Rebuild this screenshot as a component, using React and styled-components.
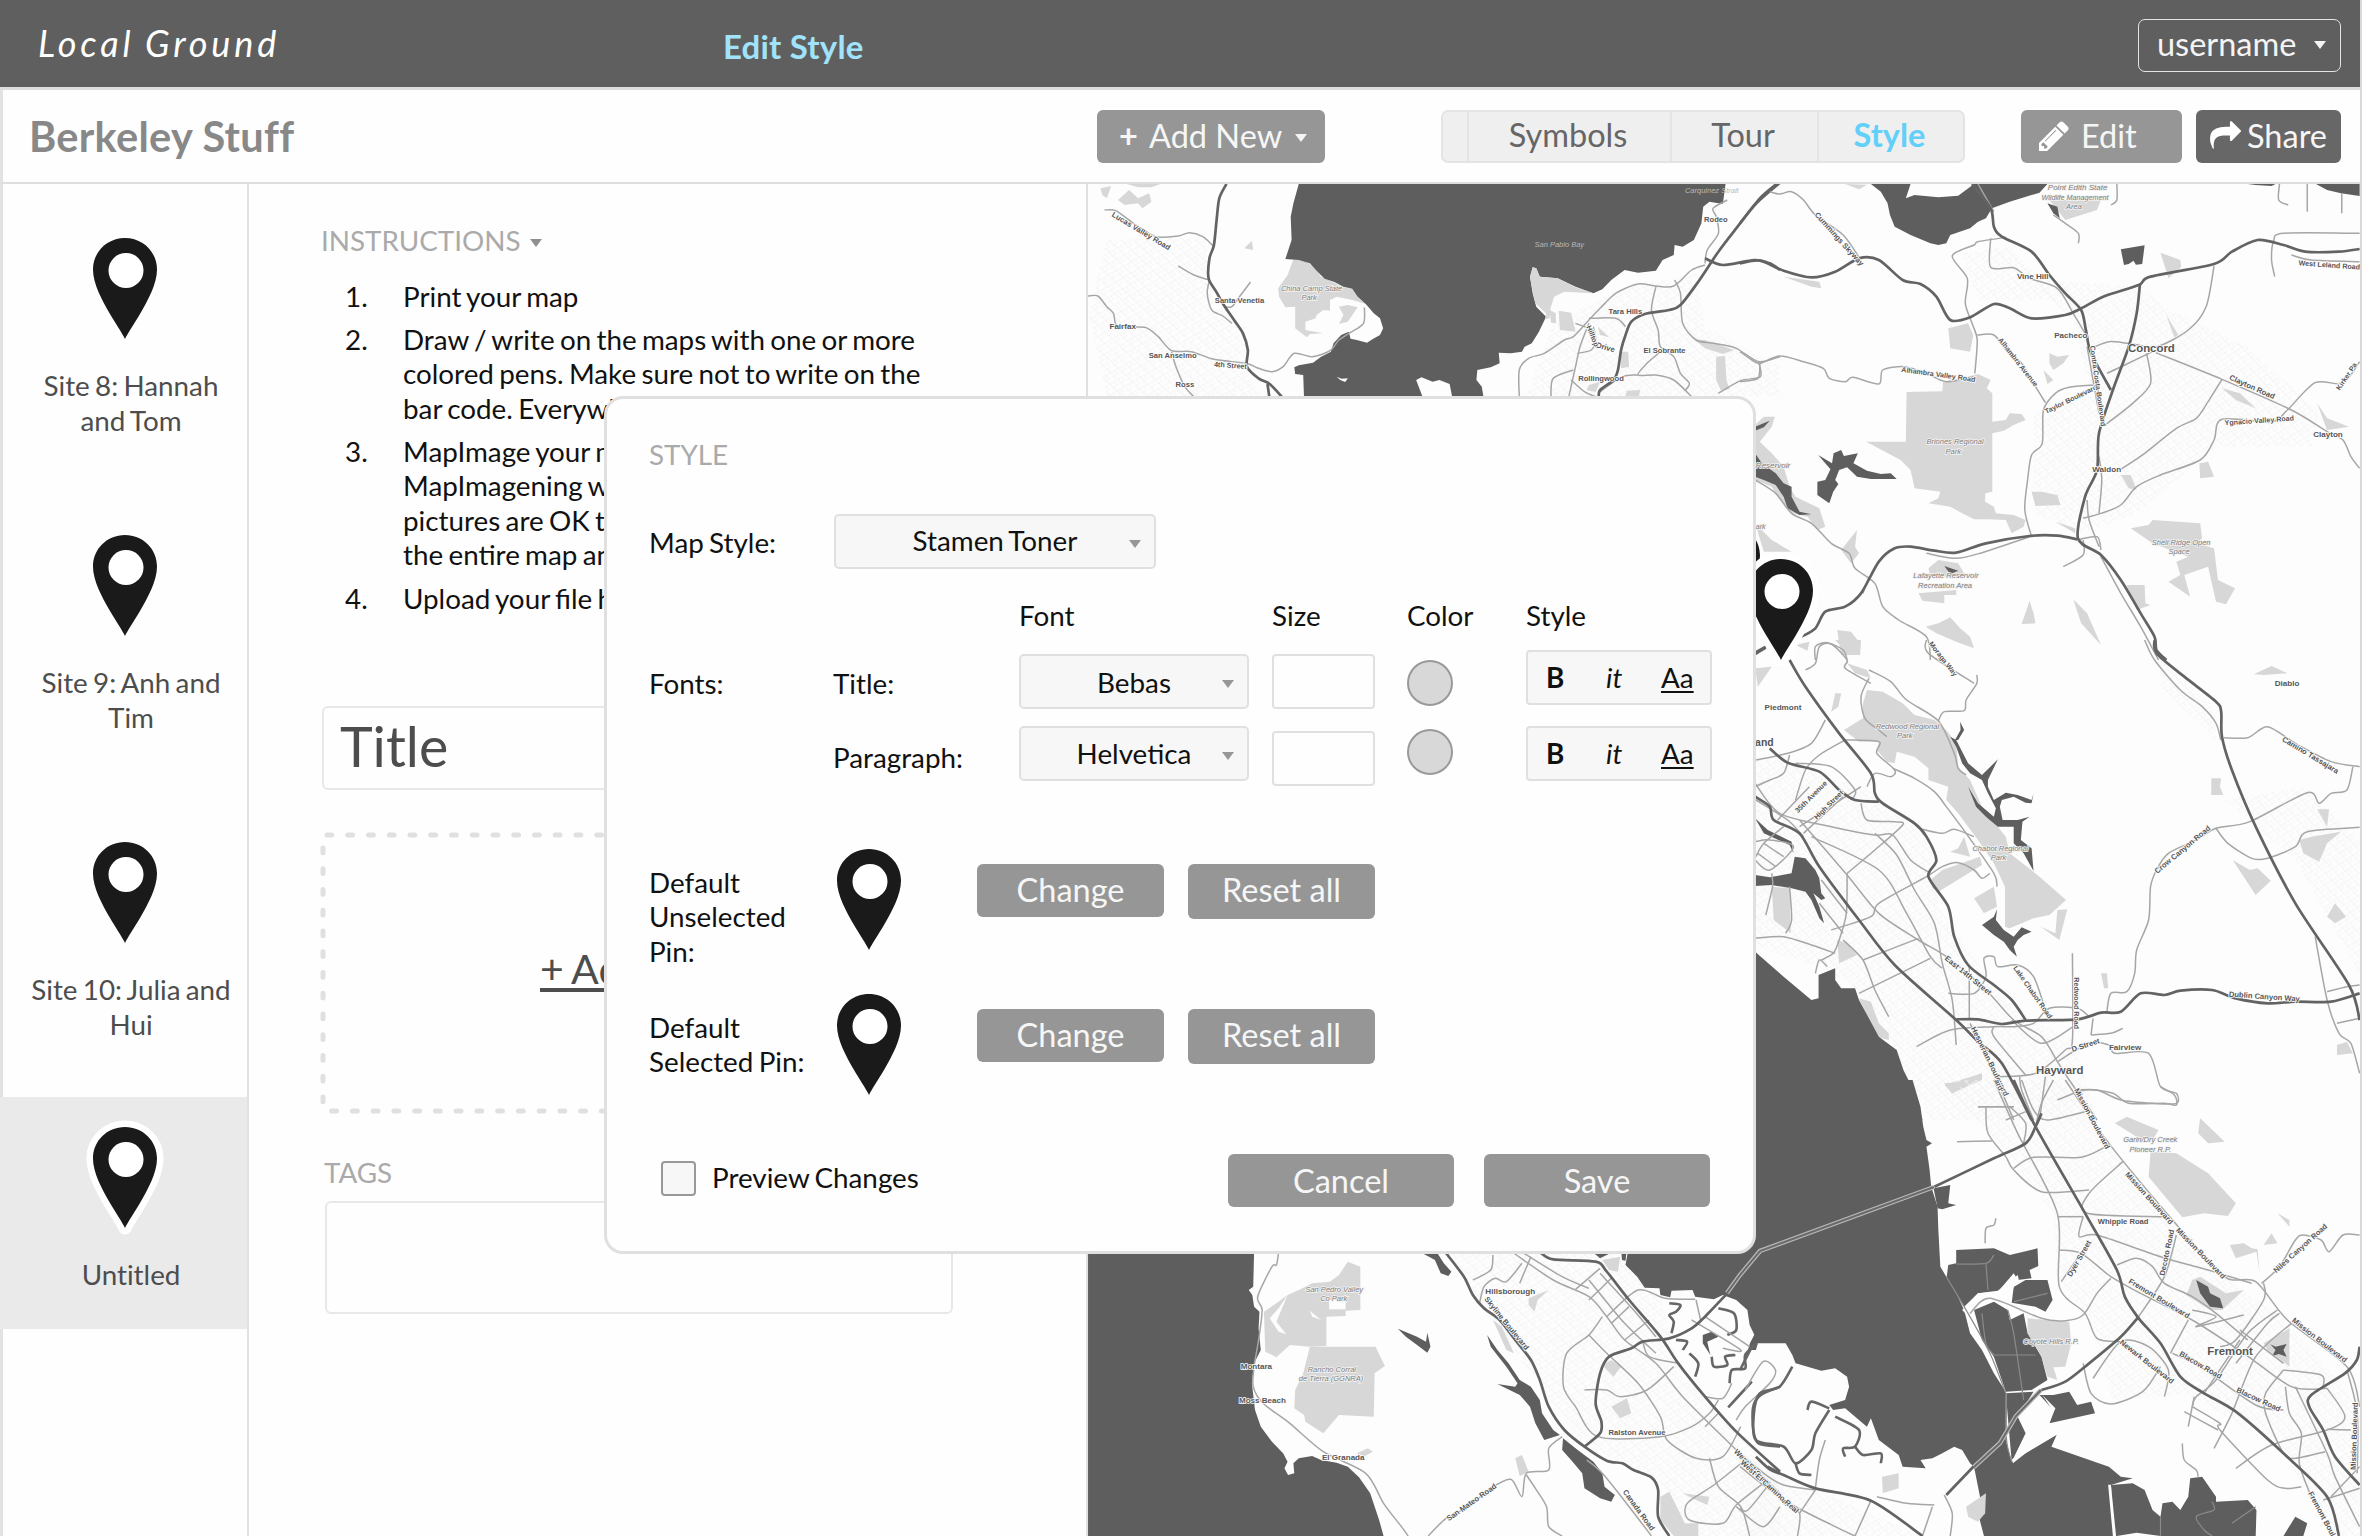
import React from "react";
import styled, { createGlobalStyle, css } from "styled-components";

const GlobalStyle = createGlobalStyle`
  *, *::before, *::after { box-sizing: border-box; }
  body { margin: 0; background: #fff; }
`;

/* ---------- shell ---------- */

const Page = styled.div`
  position: relative;
  display: flex;
  flex-direction: column;
  width: 2362px;
  height: 1536px;
  overflow: hidden;
  border-right: 2px solid #d9d9d9;
  background: #fefefe;
  font-family: Lato, "Open Sans", sans-serif;
  font-size: 27.8px;
  line-height: 34.5px;
  word-spacing: -1.8px;
  color: #111;
`;

const TopBar = styled.header`
  display: grid;
  grid-template-columns: 685px 1fr auto;
  align-items: center;
  flex: none;
  height: 90px;
  padding: 0 19px 0 38px;
  border-bottom: 3px solid #dedede;
  background: #5f5f5f;
  color: #f4f4f4;
`;

const Logo = styled.span`
  font-style: italic;
  font-weight: 400;
  font-size: 36px;
  letter-spacing: 3.9px;
  color: #fff;
`;

const ScreenName = styled.span`
  padding-top: 5px;
  font-size: 33px;
  font-weight: 700;
  letter-spacing: 0.2px;
  word-spacing: 0;
  color: #a0e3fa;
`;

const Caret = styled.i`
  flex: none;
  width: 0;
  height: 0;
  margin-top: ${(p) => p.$drop || 0}px;
  border: solid transparent;
  border-width: 8px 6px 0;
  border-top-color: ${(p) => p.$color || "#979797"};
`;

const UserButton = styled.button`
  display: flex;
  align-items: center;
  justify-content: space-between;
  width: 203px;
  height: 53px;
  margin-top: 3px;
  padding: 0 14px 3px 18px;
  border: 1.5px solid #e4e4e4;
  border-radius: 7px;
  background: none;
  color: #f4f4f4;
  font: 32.5px Lato, sans-serif;
`;

const Toolbar = styled.div`
  display: flex;
  align-items: center;
  flex: none;
  height: 94px;
  padding: 0 19px 0 26px;
  border-left: 3px solid #e2e2e2;
  border-bottom: 2px solid #dedede;
`;

const ProjectName = styled.h1`
  width: 1068px;
  margin: 0;
  font-size: 41.5px;
  line-height: 48px;
  font-weight: 700;
  letter-spacing: 0.3px;
  word-spacing: 0;
  font-variant-ligatures: none;
  color: #888;
`;

const Button = styled.button`
  display: flex;
  align-items: center;
  justify-content: center;
  flex: none;
  width: ${(p) => p.$width}px;
  height: ${(p) => p.$height || 53}px;
  padding: 0 0 ${(p) => (p.$height ? 3 : 1)}px;
  border: 0;
  border-radius: 6px;
  background: ${(p) => (p.$dark ? "#676767" : "#969696")};
  color: #f6f6f6;
  font: 32.5px Lato, sans-serif;
`;

const AddButton = styled(Button)`
  justify-content: flex-start;
  gap: 13px;
  padding-left: 22px;
  margin-right: 116px;
`;

const Plus = styled.b`
  width: 17px;
`;

const IconButton = styled(Button)`
  justify-content: flex-start;
  gap: ${(p) => p.$gap}px;
  padding-left: ${(p) => p.$pad}px;
  margin-right: ${(p) => p.$after || 0}px;
`;

const Segments = styled.nav`
  display: flex;
  flex: none;
  width: 524px;
  height: 53px;
  margin-right: 56px;
  border: 2px solid #e4e4e4;
  border-radius: 7px;
  background: #efefef;
`;

const Segment = styled.span`
  display: flex;
  align-items: center;
  justify-content: center;
  width: ${(p) => p.$width}px;
  padding: 0 3px 1px 0;
  border-right: ${(p) => (p.$last ? 0 : "2px solid #e4e4e4")};
  font-size: 32.5px;
  font-weight: ${(p) => (p.$active ? 700 : 400)};
  color: ${(p) => (p.$active ? "#62d0f8" : "#666")};
`;

const Body = styled.div`
  display: flex;
  flex: 1;
  min-height: 0;
`;

/* ---------- site list ---------- */

const Sidebar = styled.aside`
  flex: none;
  width: 249px;
  padding-top: 24px;
  border-left: 3px solid #e2e2e2;
  border-right: 2px solid #e2e2e2;
`;

const SiteItem = styled.div`
  height: ${(p) => p.$height}px;
  padding: 30px 0 0 23px;
  ${(p) =>
    p.$selected &&
    css`
      margin-left: -3px;
      padding-left: 26px;
      background: #eaeaea;
    `}
`;

const SiteLabel = styled.div`
  width: 210px;
  margin-top: 30px;
  text-align: center;
  font-variant-ligatures: none;
  color: #4d4d4d;
`;

const PinSvg = styled.svg`
  display: block;
  flex: none;
  overflow: visible;
  width: 64px;
  height: 101px;
  margin-left: ${(p) => p.$indent || 0}px;
`;

/* ---------- editor column ---------- */

const Editor = styled.main`
  flex: none;
  width: 837px;
  padding: 40px 0 0 72px;
`;

const SectionLabel = styled.div`
  display: flex;
  align-items: center;
  gap: 9px;
  color: #aaa;
`;

const Steps = styled.ol`
  display: grid;
  gap: 8.7px;
  margin: 21px 0 90px;
  padding: 0;
  list-style: none;
`;

const Step = styled.li`
  display: grid;
  grid-template-columns: 58px 1fr;
  padding-left: 24px;
  white-space: pre;
`;

const TitleInput = styled.div`
  width: 630px;
  height: 84px;
  margin-left: 1px;
  padding-left: 16px;
  border: 2px solid #e8e8e8;
  border-radius: 6px;
  font-size: 55.500px;
  line-height: 76px;
  font-variant-ligatures: none;
  color: #4d4d4d;
`;

const DropZone = styled.div`
  position: relative;
  width: 630px;
  height: 276px;
  margin: 45px 0 45px 2px;
  padding: 109px 0 0 217px;
`;

const DashFrame = styled.svg`
  position: absolute;
  inset: 0;
  overflow: visible;
`;

const AddMedia = styled.span`
  display: inline-block;
  height: 48px;
  border-bottom: 4px solid #4d4d4d;
  font-size: 41px;
  line-height: 49px;
  color: #4d4d4d;
`;

const TagsInput = styled.div`
  width: 628px;
  height: 113px;
  margin: 10px 0 0 4px;
  border: 2px solid #e8e8e8;
  border-radius: 6px;
`;

const TagsLabel = styled(SectionLabel)`
  padding-left: 3px;
`;

/* ---------- map ---------- */

const MapPane = styled.section`
  position: relative;
  flex: 1;
  border-left: 2px solid #e0e0e0;
  overflow: hidden;
`;

const MapSvg = styled.svg`
  display: block;
  background: #fdfdfd;
  font-family: "Liberation Sans", Arial, sans-serif;
  word-spacing: 0;
`;

const Marker = styled.div`
  position: absolute;
  left: ${(p) => p.$x}px;
  top: ${(p) => p.$y}px;
`;

/* ---------- dialog ---------- */

const Dialog = styled.section`
  position: absolute;
  left: 604px;
  top: 396px;
  width: 1152px;
  height: 858px;
  padding: 39px 0 0 42px;
  border: 3px solid #e0e0e0;
  border-radius: 19px;
  background: #fefefe;
`;

const MapStyleRow = styled.div`
  display: grid;
  grid-template-columns: 185px auto;
  margin-top: 41px;
`;

const Cell = styled.span`
  padding-top: ${(p) => p.$top || 0}px;
`;

const FontGrid = styled.div`
  display: grid;
  grid-template-columns: 184px 186px 253px 135px 119px 188px;
  grid-template-rows: 55px 72px 60px;
  margin-top: 30px;
`;

const Select = styled.div`
  display: flex;
  align-items: center;
  justify-content: center;
  position: relative;
  width: ${(p) => p.$width}px;
  height: 55px;
  padding-top: ${(p) => p.$drop || 0}px;
  border: 2px solid #e0e0e0;
  border-radius: 5px;
  background: #f7f7f7;
`;

const SelectCaret = styled(Caret)`
  position: absolute;
  right: 13px;
  top: 24px;
`;

const SizeInput = styled.div`
  width: 103px;
  height: 55px;
  margin-top: ${(p) => p.$top || 0}px;
  border: 2px solid #e0e0e0;
  border-radius: 4px;
`;

const Swatch = styled.div`
  width: 46px;
  height: 46px;
  margin-top: ${(p) => p.$top}px;
  border: 2px solid #999;
  border-radius: 50%;
  background: #d8d8d8;
`;

const StyleToggle = styled.div`
  display: grid;
  grid-template-columns: 60px 55px auto;
  align-items: center;
  width: 186px;
  height: 55px;
  margin-top: ${(p) => p.$top || 0}px;
  padding: 2px 0 0 18px;
  border: 2px solid #e0e0e0;
  border-radius: 4px;
  background: #f7f7f7;

  u {
    text-decoration-thickness: 2px;
    text-underline-offset: 3px;
    text-decoration-skip-ink: none;
  }
`;

const PinRow = styled.div`
  display: grid;
  grid-template-columns: 188px 140px 211px auto;
  height: 145.3px;
`;

const PinRows = styled.div`
  margin-top: 63px;
`;

const ButtonCell = styled.div`
  padding-top: 15px;
`;

const PinLabel = styled.div`
  width: 160px;
  padding-top: 17px;
`;

const Footer = styled.div`
  display: flex;
  align-items: flex-start;
  margin-top: 15px;
  padding-left: 12px;
`;

const Checkbox = styled.span`
  width: 35px;
  height: 35px;
  margin: 7px 16px 0 0;
  border: 2.5px solid #999;
  border-radius: 4px;
  background: #f7f7f7;
`;

const CheckLabel = styled.label`
  width: 516px;
  padding-top: 7px;
`;

const Actions = styled.div`
  display: flex;
  gap: 30px;
`;

/* ---------- icons ---------- */

const PIN = "M32 0C14 0 0 14 0 31.5C0 46 9 62 17 76C23 86 29 95 32 101C35 95 41 86 47 76C55 62 64 46 64 31.5C64 14 50 0 32 0Z";

function Pin({ halo, indent }) {
  return (
    <PinSvg viewBox="0 0 64 101" $indent={indent}>
      {halo && <path d={PIN} fill="#fff" stroke="#fff" strokeWidth="13" strokeLinejoin="round" />}
      <path d={PIN} fill="#1a1a1a" />
      <circle cx="33" cy="32.500" r="17.500" fill="#fff" />
    </PinSvg>
  );
}

const PencilIcon = () => (
  <svg width="30" height="30" viewBox="0 0 1536 1536" fill="#fff">
    <path d="M363 1408l91-91-235-235-91 91v107h128v128h107zM886 480q0-22-22-22-10 0-17 7L305 1007q-7 7-7 17 0 22 22 22 10 0 17-7l542-542q7-7 7-17zM832 288l416 416-832 832H0v-416zM1515 384q0 53-37 90l-166 166-416-416 166-165q36-38 90-38 53 0 91 38l235 234q37 39 37 91z" />
  </svg>
);

const ShareIcon = () => (
  <svg width="31" height="31" viewBox="0 0 1792 1792" fill="#fff">
    <path d="M1792 640q0 26-19 45l-512 512q-19 19-45 19t-45-19-19-45v-256h-224q-98 0-175.5 6t-154 21.5-133 42.5-105.5 69.5-80 101-48.5 138.5-17.5 181q0 55 5 123 0 6 2.5 23.5t2.5 26.5q0 15-8.5 25t-23.5 10q-16 0-28-17-7-9-13-22t-13.5-30-10.5-24q-127-285-127-451 0-199 53-333 162-403 875-403h224v-256q0-26 19-45t45-19 45 19l512 512q19 19 19 45z" />
  </svg>
);

/* ---------- map data: one entry per sheet, each in its own units ---------- */

const SX_WIDE = 700 / 1568;
const SX = 622 / 1568;
const SY = 1 / 3;

const SHEETS = [
  {
    x: 1080, y: 180, sx: SX_WIDE,
    urban: ["60,180 280,170 300,380 370,440 370,560 400,648 60,648 20,400", "1060,430 1200,330 1380,280 1400,440 1568,560 1568,648 1000,648"],
    park: [
      "478,238 505,243 525,262 540,290 570,308 590,322 612,328 625,355 640,372 610,360 575,350 560,360 560,392 545,390 530,405 528,415 505,425 505,450 545,460 515,462 508,472 482,445 482,380 460,382 446,350 444,325 465,285",
      "580,380 600,375 622,382 600,425 580,432 590,405",
      "1072,392 1100,398 1110,455 1075,450", "1052,390 1066,400 1066,430 1055,428",
      "1375,478 1400,480 1465,510 1440,522 1400,505", "1425,530 1445,528 1448,600 1455,628 1435,630 1425,600",
      "1210,515 1228,515 1230,560 1212,565", "46,25 70,18 60,55 50,45", "85,60 110,30 130,55 155,40 160,65 140,85 130,70 100,75",
      "385,182 368,205 388,210", "105,12 180,12 160,22 130,22", "1140,615 1165,605 1155,636 1135,630", "1225,632 1255,630 1250,660 1220,660",
      "1160,440 1185,472 1165,465",
    ],
    water: [
      "490,12 478,70 472,110 474,180 460,237 490,240 515,250 530,272 548,296 570,306 590,320 610,326 622,350 640,372 658,400 672,415 679,445 672,465 655,478 643,488 620,480 606,476 602,455 585,465 568,490 562,515 540,530 522,548 490,556 480,562 482,582 500,585 502,660 905,660 900,620 888,600 890,570 920,562 940,550 938,518 965,520 990,515 996,500 1012,490 1028,455 1044,410 1022,380 1014,340 1008,290 1014,262 1022,265 1030,290 1070,295 1110,320 1150,340 1170,328 1190,300 1220,270 1250,278 1290,272 1305,240 1330,225 1332,195 1350,200 1375,180 1392,130 1396,80 1410,65 1440,72 1446,12",
    ],
    park2: ["1014,262 1022,265 1030,290 1070,295 1110,322 1150,340 1085,335 1062,350 1054,385 1052,415 1042,418 1044,400 1020,370 1012,320 1008,290"],
    land: ["753,600 765,592 790,605 805,600 828,612 835,660 770,660", "575,590 586,596 600,595 594,606 583,600"],
    major: [
      "328,12 312,55 306,120 300,195 290,235 288,295 305,335 322,375 345,420 365,460 376,510 374,560 400,595 425,612 452,650",
      "420,612 424,650",
      "1568,8 1515,70 1470,145 1430,215 1385,305 1345,375 1320,390 1265,402 1235,425 1222,465 1212,510 1205,570 1195,600 1165,630 1162,650",
      "1400,235 1440,255 1510,240 1545,250 1568,270",
    ],
    mid: [
      "55,90 80,92 120,130 170,170 220,168 245,158 275,170 300,200",
      "18,348 40,348 60,380 75,400 85,440 145,442 175,470 205,512 250,515 300,538 372,550 400,565 430,575 455,560 480,520 520,530 560,512 580,480 605,458 635,430 637,382",
      "205,515 215,560 235,620 255,650", "220,258 255,285 290,300", "290,300 285,340 295,390 320,408 340,430", "382,306 360,345 340,380 325,380",
      "984,650 984,570 1005,535 1040,520 1085,480 1105,470 1140,420 1165,385 1200,340 1250,312 1290,318 1330,318 1370,270 1400,255",
      "1400,250 1405,210 1430,160 1425,110 1418,85 1450,60", "1332,300 1345,340 1350,430 1380,480 1420,490 1470,505 1520,545 1568,530",
      "1520,545 1524,590 1480,602 1430,640", "1290,320 1280,390 1295,450 1300,500 1330,530 1345,580 1365,610 1355,632",
      "1300,515 1270,550 1250,585 1290,585 1330,600 1370,650", "1140,415 1200,415 1222,440", "1140,430 1120,500 1110,560 1095,650",
      "1055,650 1060,595 1105,570", "1115,520 1145,510 1155,480 1150,440", "1110,430 1150,450", "1160,640 1215,590 1250,585", "1100,600 1130,635 1155,650",
    ],
    labels: [
      [70, 108, "Lucas Valley Road", 8, 31], [302, 368, "Santa Venetia", 8], [66, 446, "Fairfax", 8.5], [154, 535, "San Anselmo", 8], [300, 560, "4th Street", 7.5, 4],
      [214, 622, "Ross", 8], [450, 332, "China Camp State", 7.5, 0, 1], [496, 361, "Park", 7.5, 0, 1], [1398, 126, "Rodeo", 8], [1184, 403, "Tara Hills", 8],
      [1262, 518, "El Sobrante", 8], [1116, 602, "Rollingwood", 8], [1155, 502, "Drive", 8, 15], [1134, 440, "Hilltop", 7.5, 68],
      [1018, 202, "San Pablo Bay", 7.5, 0, 2], [1355, 38, "Carquinez Strait", 7.5, 0, 2],
    ],
  },
  {
    x: 1740, y: 180, sx: SX,
    urban: ["600,180 780,300 1000,320 1100,400 1280,500 1460,700 1440,800 1200,800 1000,1000 860,1060 740,1000 740,700 880,620 840,420", "560,220 680,200 800,360 600,360"],
    park: [
      "420,636 510,634 512,605 560,595 600,582 632,600 622,625 636,640 636,725 670,720 680,700 710,702 720,720 690,735 665,752 636,760 636,935 618,940 618,965 640,980 645,1000 690,1005 720,1020 715,1040 685,1060 670,1020 625,1018 590,1018 560,1000 530,980 475,970 500,955 505,935 440,925 430,870 405,840 318,785 418,785",
      "38,735 60,710 88,710 80,740 50,785 80,820 110,860 125,920 140,950 200,985 215,1040 195,1050 170,1010 130,1000 100,960 80,920 38,900",
      "525,445 575,430 588,465 580,515 530,505",
      "985,1045 1030,1035 1040,1020 1160,1030 1165,1075 1150,1090 1195,1105 1205,1200 1248,1225 1225,1273 1200,1265 1180,1160 1120,1185 1135,1250 1080,1205 1110,1185 1100,1145 1130,1130 1040,1090",
      "820,120 900,90 910,60 780,60", "1060,218 1110,240 1112,262 1080,295", "1075,405 1105,465 1095,472 1085,440", "110,290 200,305 205,325 180,320",
      "780,520 800,530 830,525 815,550 790,570 780,550", "765,570 790,600 775,612", "735,935 760,935 800,945 808,975 745,978", "795,1025 845,1045 845,1060",
      "1158,850 1180,845 1195,890 1160,895", "960,885 985,885 1000,930 980,925", "475,1165 500,1140 550,1150 565,1180 540,1190 480,1190",
      "450,1240 545,1230 545,1245 515,1245 515,1270 460,1262", "975,1215 1020,1215 1022,1270 1035,1275 1000,1290", "245,1350 280,1355 303,1390 300,1425 255,1425",
      "468,1340 500,1330 530,1312 555,1345 580,1370 590,1405 545,1385 495,1360", "730,1262 740,1300 745,1330 710,1332", "840,1258 875,1300 910,1395 860,1330",
      "38,1030 80,1080 130,1115 60,1115", "295,1050 290,1100 300,1120 280,1150 255,1110", "1215,625 1260,640 1300,685 1250,660",
      "1455,670 1480,715 1535,740 1480,750", "140,1395 175,1385 170,1412", "265,12 320,14 300,28",
    ],
    water: [
      "330,12 355,35 372,70 378,105 390,140 430,165 480,190 500,195 520,190 530,165 580,145 600,125 620,115 635,85 680,65 755,38 775,12",
      "775,70 800,80 806,115 790,100", "1452,12 1562,12 1562,48 1515,40 1480,30", "1280,12 1350,12 1340,18 1300,15",
      "960,208 1020,196 1014,252 998,254 992,242 980,252 968,255",
      "195,905 215,900 228,868 197,825 232,850 236,820 255,810 262,828 297,820 286,850 320,872 355,882 380,880 395,897 330,897 295,890 270,862 250,870 240,900 248,912 235,935 225,970 195,945",
      "38,820 55,850 90,880 110,910 130,920 130,950 150,995 180,1003 150,1005 120,985 110,950 90,915 60,900 38,890",
      "38,740 75,722 60,742 38,752", "515,1158 550,1172 530,1182",
    ],
    land: ["430,12 418,55 440,45 500,52 550,47 590,12"],
    major: [
      "92,12 50,55 0,130",
      "0,250 50,242 110,272 180,292 240,275 300,235 350,240 410,300 455,312 495,350 530,420 580,412 640,372 680,385 735,415 820,405 860,385 920,348 1005,315 1035,290 1195,252 1240,215 1305,180 1370,195 1425,215 1510,215 1562,207",
      "585,12 632,85 640,140 660,170 735,215 780,285 820,340 860,390 872,450 885,520 935,630",
      "1008,315 1000,400 980,500 940,630 905,760 900,870 870,950 852,1075 910,1125 960,1200 1010,1300 1045,1370 1050,1410 1075,1440",
      "155,1370 190,1345 215,1295 265,1280 305,1240 350,1145 390,1105 430,1100 490,1112 545,1118 620,1090 730,1068 800,1067 850,1078",
      "38,1422 65,1403",
    ],
    mid: [
      "75,35 100,42 130,35 160,60 190,105 260,165 300,232", "600,12 640,95", "632,175 632,262 690,263 730,295 800,325 840,400 870,460",
      "670,172 600,185 590,195 535,228 573,295 568,370 585,430 598,480 592,580",
      "0,515 30,540 50,550 100,528 160,545 210,565 225,595 265,605 285,592 350,612 360,570 415,560 470,580 520,605 590,590",
      "50,550 45,595 0,605", "598,465 640,465 670,510 710,550 745,620 770,668",
      "895,615 830,622 795,640 765,690 762,790 735,825 725,900 718,990 735,1070", "1048,518 1215,598 1390,690 1480,755 1520,780 1540,830 1562,865",
      "1215,598 1180,665 1150,715 1100,745 1020,820 960,868",
      "1562,545 1520,610 1450,608 1380,690 1340,725 1215,718 1195,780 1160,840 1060,885 1000,920 960,975 910,1000 865,1015",
      "1195,258 1175,380 1130,450 1050,500 980,490 930,485 895,500", "1025,520 1035,610 990,670 920,735", "1048,510 970,555 925,580",
      "1562,160 1370,160 1345,185 1340,240 1348,290", "1390,225 1440,240 1562,245", "790,105 820,130 853,160 853,190", "875,500 890,600 905,700", "882,500 898,600 914,720",
      "905,830 912,900 905,1000", "875,960 880,1020 905,1100", "38,900 90,940 130,1000 180,1030 230,1090 275,1120 290,1165 340,1210 360,1280 400,1320 470,1370 480,1440",
      "325,1190 310,1240", "470,1120 545,1135 610,1118 730,1070", "865,1080 865,1125 815,1160", "850,1080 900,1070 910,1110",
      "910,1130 960,1240 1010,1340 1055,1440", "190,1440 190,1400 220,1388 260,1410 270,1440", "1430,12 1430,95", "1517,40 1517,100", "1360,12 1358,60 1382,75", "950,12 950,60 935,75",
    ],
    labels: [
      [187, 105, "Cummings Skyway", 8, 48], [776, 31, "Point Edith State", 8, 0, 1], [760, 60, "Wildlife Management", 7.2, 0, 1], [822, 88, "Area", 7.5, 0, 1],
      [698, 298, "Vine Hill", 8.5], [792, 473, "Pacheco", 8.5], [978, 515, "Concord", 12], [1408, 256, "West Leland Road", 7.5, 4], [650, 480, "Alhambra Avenue", 7.5, 52],
      [406, 575, "Alhambra Valley Road", 7.5, 8], [772, 702, "Taylor Boulevard", 7.5, -26], [882, 498, "Contra Costa Boulevard", 7.5, 82], [1232, 598, "Clayton Road", 8, 24],
      [1222, 736, "Ygnacio Valley Road", 7.5, -4], [1445, 772, "Clayton", 8.5], [888, 875, "Waldon", 8.5], [470, 793, "Briones Regional", 7.5, 0, 1], [518, 821, "Park", 7.5, 0, 1],
      [40, 863, "Reservoir", 8, 0, 1], [1038, 1094, "Shell Ridge Open", 7.5, 0, 1], [1080, 1122, "Space", 7.5, 0, 1], [437, 1195, "Lafayette Reservoir", 7.5, 0, 1], [449, 1223, "Recreation Area", 7.5, 0, 1],
      [1512, 632, "Kirker Pa", 7.5, -56], [40, 1048, "ark", 7, 0, 1],
    ],
  },
  {
    x: 1740, y: 640, sx: SX,
    urban: ["40,340 340,460 480,600 500,800 640,1040 740,1140 840,1200 900,1440 480,1440 380,1210 300,1050 200,980 40,920", "1220,480 1420,440 1562,600 1562,1000 1400,660", "1060,60 1190,200 1200,300 1060,140"],
    park: [
      "320,150 360,155 410,190 440,225 490,240 520,270 545,310 550,380 580,420 610,500 670,590 680,640 755,710 822,780 780,825 740,835 680,865 668,860 668,740 640,670 600,600 575,560 550,520 520,480 525,440 475,420 475,385 440,350 395,335 390,370 370,365 345,330 350,305 300,305 262,270 310,235 310,190",
      "480,720 510,690 605,650 610,675 500,755 485,745", "590,775 640,740 648,800 615,820", "758,860 795,880 800,810 825,808 805,900", "240,0 305,0 303,45 275,45",
      "270,70 320,90 330,115 290,100", "530,635 550,625 565,590 580,650", "1188,415 1213,415 1210,440 1218,465 1188,465", "1242,660 1285,690 1305,685 1338,722 1300,765",
      "1410,600 1440,590 1515,575 1480,610 1460,665 1420,640", "1455,508 1485,508 1480,560", "1505,1215 1530,1205 1545,1240 1505,1245", "1295,103 1340,78 1380,100 1320,105",
      "1480,830 1500,790 1528,830 1500,850", "245,900 270,910 295,945 250,970", "80,740 125,745 128,880 85,840", "300,1075 330,1085 350,1150 375,1180 375,1200 345,1190",
      "515,1335 610,1300 610,1320 535,1360", "910,1000 925,1000 928,1045 918,1045", "38,85 80,80 45,140", "240,160 255,160 248,200 230,215",
    ],
    water: [
      "38,935 110,1010 180,1080 198,1075 198,1005 240,985 240,1020 255,1045 290,1045 300,1080 350,1190 395,1230 412,1290 435,1345 460,1440 38,1440",
      "38,705 75,712 130,700 138,650 165,655 190,690 200,715 205,760 215,775 205,780 185,760 200,800 212,850 200,835 180,780 165,755 130,745 80,735 38,738",
      "38,535 70,570 130,605 135,640 125,615 60,580", "280,1085 300,1080 300,1100 315,1130 300,1130",
      "530,290 545,300 575,370 610,405 650,358 625,420 625,440 640,480 670,458 700,465 735,480 740,460 735,490 720,488 690,470 660,480 655,500 662,540 700,540 730,530 712,545 708,600 735,625 740,693 715,640 690,610 690,560 650,560 620,530 595,500 575,440 600,490 640,530 645,505 625,460 610,420 580,400 560,370 545,320",
      "555,245 565,270 550,300 542,300 556,270",
      "610,855 640,830 648,808 645,840 665,870 690,890 710,862 735,875 715,885 700,900 690,920 698,950 680,930 665,905 640,885",
    ],
    major: [
      "125,60 165,140 250,280 330,400 340,460 360,490 440,550 470,590 495,660 475,710 525,800 540,890 575,975 640,1035 685,1080 720,1140",
      "75,325 120,368 200,395 250,450 290,480 350,485", "38,470 75,500 85,540 150,580 200,680 300,840 390,975 545,1140 600,1205 660,1270 735,1440",
      "545,1138 600,1138 660,1152 720,1142 850,1138 910,1118 960,1115 1010,1060 1070,1065 1110,1052 1190,1050 1250,1075 1330,1090 1400,1085 1490,1085 1562,1060",
      "1045,0 1050,40 1120,110 1200,185 1213,215 1215,290 1240,390 1300,560 1400,790 1535,1035 1562,1140", "38,38 65,20",
    ],
    mid: [
      "325,90 380,125 420,180 500,243 540,340 550,385 570,405", "500,243 515,215 565,212 570,180 597,130 597,105", "470,0 475,40 590,130",
      "165,90 190,70 200,20 230,12 270,60 265,85 330,130", "325,115 305,170 315,235 350,270 370,290", "38,360 120,340 180,310 215,240", "38,440 75,420 110,400 125,345",
      "265,300 350,305 345,340 390,390 380,410 340,400 320,440", "265,300 200,345 165,390 140,480", "140,370 230,380 290,450 280,480",
      "38,430 100,520 230,560 340,585 385,585 430,660 480,700", "340,580 395,645 440,750 490,850 510,970 535,1080 545,1215",
      "385,385 440,415 490,455 520,500 570,580 640,700 648,740", "460,568 510,580 540,568 590,590", "270,700 340,630 410,555 390,545 320,540 305,490",
      "270,700 268,820 250,900 235,940 205,960", "150,540 270,705 350,820 450,900 520,950 620,1050 690,1140 760,1190 800,1265", "180,590 350,690 420,820 480,950 510,985",
      "38,895 110,890 180,915 240,940", "115,880 130,840 125,740", "38,660 75,690 135,620 75,600 38,605", "45,640 90,680", "60,610 110,650", "80,700 82,740 65,825",
      "260,900 310,960 340,1050 375,1130", "300,1060 480,955", "310,960 450,895", "230,870 330,830 350,790 470,710 510,680 550,668 590,690 610,715 630,700",
      "445,1220 530,1170 640,1160 690,1160 740,1150 780,1105 850,1105 880,1130", "525,1060 590,1060 620,1010 615,955 640,950 650,980 700,975 740,1010 770,1110",
      "578,975 578,1140", "838,940 838,1200 820,1230 745,1300 650,1310", "885,1185 935,1180 965,1165", "890,1135 885,1185", "640,1160 640,1190 720,1305", "705,1310 710,1350 740,1440",
      "770,1310 755,1440", "685,1140 760,1210 840,1160", "800,1265 830,1320 900,1440",
      "800,1265 880,1210 930,1215 945,1240 1030,1240 1060,1340 1100,1360 1100,1390 1040,1390 960,1380 900,1350 850,1350",
      "925,1115 935,1060 975,1055 995,1000 1000,930 1030,840 1035,740 1050,690 1080,640 1150,600 1200,565 1285,545 1430,458 1460,490 1490,460 1530,450 1545,380",
      "1220,293 1280,293 1330,260 1400,310 1490,365 1562,380", "1200,565 1230,610 1290,655 1330,655 1400,620 1430,575 1562,562", "1020,0 1045,60 1110,150 1165,200 1200,250 1212,300",
      "1450,890 1480,1080 1510,1180 1540,1210 1562,1300", "1480,1055 1530,1040 1562,1035", "1505,1150 1562,1135", "600,1400 690,1400", "580,1150 640,1300 690,1440",
      "40,480 120,540 160,590", "110,560 60,610 40,650", "160,580 260,470", "95,540 175,440", "205,720 270,820", "200,790 260,880", "190,1000 200,960 220,980", "150,560 305,440",
    ],
    labels: [
      [62, 211, "Piedmont", 8.5], [38, 318, "and", 11], [342, 266, "Redwood Regional", 7.5, 0, 1], [396, 294, "Park", 7.5, 0, 1], [475, 12, "Moraga Way", 7.5, 52],
      [1348, 137, "Diablo", 8.5], [1365, 302, "Camino Tassajara", 8, 31], [146, 520, "35th Avenue", 7.5, -45], [194, 540, "High Street", 7.5, -45],
      [586, 632, "Chabot Regional", 7.5, 0, 1], [632, 660, "Park", 7.5, 0, 1], [1052, 702, "Crow Canyon Road", 8, -40], [515, 958, "East 14th Street", 8, 39], [688, 984, "Lake Chabot Road", 7.5, 55],
      [842, 1012, "Redwood Road", 7.5, 90], [1232, 1070, "Dublin Canyon Way", 8, 4], [838, 1236, "D Street", 8, -18], [930, 1231, "Fairview", 8.5], [746, 1302, "Hayward", 12], [582, 1165, "Hesperian Boulevard", 8, 64],
    ],
  },
  {
    x: 1080, y: 1240, sx: SX_WIDE,
    urban: ["830,40 1228,40 1300,170 1340,380 1568,700 1568,888 1330,888 1300,720 1130,620 900,200"],
    park: [
      "490,150 520,130 560,125 580,105 600,65 628,80 628,210 595,212 595,228 552,230 552,318 515,320 470,315 440,352 415,335 412,215 440,190 465,165",
      "515,320 662,320 683,378 660,400 658,530 580,525 545,580 505,545 502,525 480,505 482,450 500,400", "975,655 990,645 1005,695 985,708", "620,640 645,625 656,635 635,650",
      "1005,175 1050,150 1025,180 1018,215 1005,195", "1170,375 1190,360 1212,380 1195,410", "1190,500 1225,475 1235,520 1210,535",
      "1300,770 1320,755 1355,850 1385,850 1385,888 1330,888 1300,840", "1350,760 1410,770 1405,795 1380,780", "1170,60 1210,50 1205,95 1185,90", "925,240 945,260 972,340 955,330",
    ],
    land: ["425,235 445,205 465,165 440,245 462,283 445,275", "515,212 540,240 520,230", "558,180 595,180 595,208 558,208"],
    water: [
      "18,36 390,36 388,140 378,150 386,165 390,200 402,215 400,265 405,330 390,370 385,430 392,510 405,560 430,605 455,640 465,665 458,685 466,705 480,700 478,670 490,655 520,648 540,660 575,668 600,680 625,712 650,760 670,840 680,888 18,888",
      "765,38 800,38 815,70 832,95 825,108 808,100 795,60",
      "1228,30 1570,0 1570,300 1530,305 1516,300 1500,255 1495,210 1470,180 1440,165 1420,178 1378,170 1372,150 1325,152 1322,172 1300,165 1298,145 1265,143 1248,110 1222,75",
      "712,266 755,290 775,305 778,278 785,320 778,338 755,315 730,290",
      "912,285 935,330 960,370 985,420 1010,440 1030,480 1035,520 1060,570 1075,585 1040,600 1020,550 1008,500 985,465 935,432 975,440 980,430 955,380 920,320",
      "1082,595 1115,630 1150,665 1170,700 1175,740 1198,765 1190,785 1165,775 1130,745 1125,700 1100,660 1080,630", "1150,38 1190,38 1165,55", "1395,285 1415,275 1430,290 1405,305 1412,345 1395,310",
      "1213,38 1224,38 1222,62 1214,60",
    ],
    major: [
      "818,36 860,110 880,165 905,205 940,240 975,300 1010,360 1030,420 1050,500 1085,570 1130,620 1180,662 1215,670 1240,690 1280,712 1295,750 1295,830 1320,888",
      "1030,36 1060,58 1155,65 1180,95 1230,180 1300,290 1340,370 1400,470 1470,575 1568,695",
      "1130,620 1165,580 1168,545 1155,490 1165,400 1185,350 1235,325 1260,305 1320,295 1370,265 1400,230 1450,160",
    ],
    mid: [
      "445,36 440,75 430,80 398,170 408,210 400,300 390,380 388,440 410,490 470,550 545,635 640,700 680,790 720,860 735,888",
      "780,888 820,835 870,800 920,745 965,718 990,770 1000,700 1050,690 1050,625 1080,590", "1000,705 1020,745 1045,800 1050,860 1080,888",
      "990,70 955,125 930,115 905,140 895,190", "880,120 920,90 925,45", "968,36 1060,120 1140,170 1180,230 1220,300 1290,370 1350,470 1470,630 1568,760", "990,36 1080,110 1140,145",
      "1170,230 1140,285 1090,340 1083,440 1110,500 1160,590 1300,590 1370,560 1410,520 1430,480", "1180,230 1250,150 1310,175 1378,178",
      "1140,285 1180,340 1250,430 1300,530 1315,600 1380,655 1440,650 1480,560", "1130,450 1180,450 1210,470 1270,450 1330,380", "1110,148 1165,85", "1140,180 1190,115",
      "1190,250 1230,200", "1220,300 1275,240", "1135,660 1170,700 1230,800 1280,888", "1490,660 1420,735 1360,790 1365,840 1440,850 1470,795 1540,720",
      "1410,655 1430,740 1480,800 1500,888", "1470,800 1530,860 1568,800", "1260,300 1275,350 1340,370", "1400,230 1500,320", "1380,180 1390,240", "1370,240 1480,330 1440,325",
      "1490,450 1530,365 1558,390 1545,430 1490,500 1470,540", "1400,470 1440,475 1460,430", "1140,120 1220,250 1290,340", "1165,100 1240,210 1290,290", "985,130 1010,50", "1400,560 1430,520",
    ],
    lagoon: [
      "1320,190 1345,195 1335,215 1320,225 1330,245 1325,280", "1430,205 1465,220 1470,270 1450,285", "1365,340 1385,370 1378,410", "1335,300 1360,305 1350,330",
      "1415,350 1420,380 1450,375 1445,350 1468,345", "1568,440 1525,465 1508,500 1508,570 1520,610 1568,620", "1516,310 1490,345 1490,385 1460,390 1455,430", "1452,502 1505,425", "1540,680 1568,700",
    ],
    labels: [
      [505, 156, "San Pedro Valley", 7.5, 0, 1], [538, 184, "Co Park", 7.5, 0, 1], [360, 386, "Montara", 8.5], [356, 488, "Moss Beach", 8.5], [510, 396, "Rancho Corral", 7.5, 0, 1],
      [490, 424, "de Tierra (GGNRA)", 7.5, 0, 1], [542, 660, "El Granada", 8.5], [908, 162, "Hillsborough", 8.5], [905, 178, "Skyline Boulevard", 8, 51], [1184, 586, "Ralston Avenue", 8, 0],
      [826, 844, "San Mateo Road", 8, -35], [1215, 756, "Canada Road", 8, 54], [1464, 636, "West El Camino Real", 8, 46],
    ],
  },
  {
    x: 1740, y: 1080, sx: SX,
    urban: ["500,0 800,0 960,240 1220,590 1380,720 1562,980 1562,1368 1500,1368 1370,1120 1130,940 940,960 870,700 800,600 790,400 680,230", "0,1120 190,1230 460,1368 0,1368"],
    park: [
      "945,130 975,110 1055,150 1040,180 1000,170", "1035,215 1100,220 1180,280 1250,370 1230,408 1170,400 1115,412 1030,290", "1160,115 1222,185 1180,190 1155,160",
      "1140,600 1160,590 1225,640 1270,630 1215,690 1185,690 1125,645", "1320,790 1385,745 1385,860 1330,810",
      "1235,495 1270,490 1290,505 1305,508 1310,580 1302,515 1250,535", "1320,495 1340,460 1355,490", "1355,400 1385,420 1385,440", "358,1190 400,1180 400,1225 360,1240", "515,10 570,5 535,42",
    ],
    water: [
      "38,0 435,0 455,80 462,140 470,180 484,190 470,200 478,270 482,320 498,380 500,450 505,560 520,590 545,640 565,690 580,760 610,810 640,880 670,935 670,1080 685,1145 800,1060 785,1100 930,1160 960,1190 990,1195 935,1215 945,1368 615,1368 600,1300 605,1250 590,1160 580,1150 560,1110 540,1100 510,1120 485,1135 455,1140 468,1165 410,1160 400,1125 350,1080 330,1015 320,1040 265,985 235,990 225,975 265,960 275,920 270,890 240,865 205,872 140,850 132,825 115,790 45,790 40,810 20,810 25,790 40,755 30,700 0,665 -10,480 38,480",
      "545,510 640,505 680,525 750,505 752,558 730,570 735,595 700,600 690,580 650,635 600,640 565,680 520,600 525,555 545,550",
      "690,620 720,600 775,600 788,660 770,695 745,680 685,668", "590,690 640,665 675,690 680,720 715,700 725,760 760,830 775,900 735,930 670,935 640,830 610,780",
      "670,940 740,935 700,1010 720,1060 685,1145", "755,945 790,945 830,935 850,975 885,965 895,1000 780,1030 790,990",
      "935,1215 990,1210 1020,1230 1040,1290 1060,1310 1065,1270 1090,1265 1110,1290 1130,1250 1135,1195 1165,1190 1200,1250 1200,1265 1280,1260 1302,1290 1300,1368 945,1368",
      "1370,1368 1400,1310 1430,1330 1420,1368", "488,325 530,315 525,370 545,375 510,388 498,385", "1150,600 1180,620 1185,640 1210,655 1218,685 1185,680 1160,640",
      "1337,793 1350,800 1378,792 1370,810 1378,830 1358,822 1342,828 1350,810",
    ],
    land: ["690,1140 790,1045 770,1030 780,1055 740,1075 700,1125 686,1138 688,1150 720,1120 802,1062 800,1050", "762,945 795,985 775,1045 765,1045 785,985", "950,1368 1000,1358 1060,1368", "560,690 600,640 650,632 700,585 705,610 690,620 680,660 640,655 600,665 572,705", "928,1214 935,1214 948,1368 940,1368"],
    park2: ["725,715 830,725 835,790 820,860 790,862 800,900 775,890 760,830 725,760", "570,1280 620,1240 618,1300 600,1325 575,1310"],
    major: [
      "690,0 745,140 870,400 950,570 970,650 1005,715 1060,790 1110,890 1170,940 1250,995 1370,1120 1480,1250 1510,1368", "760,100 745,140 720,190 640,235 490,320",
      "1005,710 960,770 880,850 820,905 760,930", "1562,800 1555,840 1525,880 1440,945 1435,980 1470,1050 1500,1130 1562,1215", "40,1130 75,1168 110,1185 190,1225 330,1262 460,1368", "590,1158 520,1245",
    ],
    mid: [
      "790,0 760,70 745,140", "820,0 930,190 1105,440 1220,590 1300,605 1380,720 1530,860 1562,980", "640,0 700,160 800,400 805,620 870,700 900,775 960,785", "600,80 690,80",
      "620,80 625,160 670,230 690,270 760,335 880,330", "547,185 635,183", "690,265 740,232 860,232 930,195", "710,0 740,90 775,120 870,95", "800,60 870,30 940,40 980,70 1070,70 1100,75 1095,45 1060,20",
      "965,245 880,340 875,400 1065,410", "800,410 865,410", "865,410 855,470 900,465 1060,530 1180,570 1290,610", "805,510 860,520 935,590 1010,640 1140,720 1270,820 1390,920 1480,925",
      "865,510 810,605", "950,555 1000,535 1040,560 1070,610 1140,650 1200,700 1280,780", "1100,465 1070,590 1005,710", "935,595 900,640 865,705 820,722 760,715 630,655 580,700",
      "1130,720 1085,820", "1090,820 1160,860 1300,975 1370,990", "1390,730 1300,830 1240,1000 1195,1105", "1355,690 1280,760 1200,900 1150,950 1140,980", "1320,610 1320,660 1250,780 1210,800",
      "1370,870 1325,940 1325,1000 1370,1120 1400,1135 1475,1115", "1370,870 1465,885 1470,920", "1375,920 1385,1000 1415,1060 1410,1150 1440,1250", "1400,920 1480,1120 1500,1190 1562,1340",
      "1480,925 1525,1010 1480,1050 1340,1095 1250,1165", "1140,980 1210,1030 1210,1050 1330,1200 1375,1225 1415,1220", "890,895 960,785 1030,800 1080,870 1070,950",
      "865,850 885,940 935,972 1015,935 1060,860", "1120,995 1205,1050", "1145,950 1130,1040", "1490,1250 1562,1160", "1470,1260 1562,1225", "1315,610 1360,560 1400,480 1420,465 1465,480 1485,515 1520,465 1562,465",
      "1140,690 1200,710 1150,740 1270,705", "645,415 640,435 620,445 618,490", "1115,1090 1120,1140 1150,1170 1155,1190", "0,1120 60,1180 110,1215 190,1230", "190,1225 200,1140 215,1080",
      "330,1262 290,1368", "345,1250 420,1270 490,1275", "515,1245 535,1300 530,1368", "460,1368 485,1280", "0,1285 20,1290 75,1210", "110,1260 150,1300 145,1368", "190,1230 150,1300", "0,1160 110,1260 240,1340 290,1368",
      "1250,850 1330,730 1360,700", "1170,940 1260,780", "1260,750 1370,850", "1480,1048 1540,1050", "1530,870 1556,1000 1556,1180", "680,80 720,130 715,190", "670,120 720,95",
    ],
    lagoon: [
      "132,860 100,920 50,940 35,1000 40,1080 110,1100 140,1150 180,1110 190,1060 225,990", "225,985 180,965 170,990", "240,1010 300,1050 290,1100 260,1105 265,1130", "290,1100 310,1125 355,1120 355,1150", "0,870 30,800", "140,1150 150,1180 180,1185",
    ],
    divider: [
      "545,552 620,550 640,525", "620,550 625,630", "640,825 745,825", "675,690 690,760 715,960", "610,700 620,790 640,825", "690,665 775,640", "1060,1310 1060,1368", "1190,1265 1195,1290 1150,1310 1170,1350 1190,1368", "1240,1330 1300,1280",
      "520,590 570,690 630,820 670,940", "672,940 672,1080 685,1145",
    ],
    labels: [
      [842, 30, "Mission Boulevard", 8, 62], [970, 284, "Mission Boulevard", 8, 48], [1098, 452, "Mission Boulevard", 8, 46], [1390, 724, "Mission Boulevard", 8, 38], [966, 187, "Garin/Dry Creek", 7.5, 0, 1],
      [982, 215, "Pioneer R.P.", 7.5, 0, 1], [902, 431, "Whipple Road", 8], [1070, 588, "Decoto Road", 8, -78], [835, 592, "Dyer Street", 8, -60], [978, 608, "Fremont Boulevard", 8, 31],
      [714, 793, "Coyote Hills R.P.", 7.5, 0, 1], [1178, 825, "Fremont", 12], [956, 790, "Newark Boulevard", 8, 38], [1106, 826, "Blacow Road", 8, 30], [1250, 935, "Blacow Road", 8, 25],
      [1352, 580, "Niles Canyon Road", 8, -42], [1552, 1170, "Mission Boulevard", 8, -88], [1432, 1240, "Fremont Boul", 8, 62], [0, 1150, "West El Camino Real", 8, 42], [640, 2, "ard", 8, 64],
    ],
  },
];

/* causeways: pale twin lines over the bay */
const BRIDGES = ["M1934 1187L1760 1251L1740 1275L1727 1293", "M2041 1390L2016 1416L2000 1443L1974 1467"];

const points = (str) => str.split(" ").map((p) => p.split(",").map(Number));

function curve(str) {
  const p = points(str);
  let d = `M${p[0][0]} ${p[0][1]}`;
  for (let i = 0; i < p.length - 1; i++) {
    const a = p[i - 1] || p[i];
    const b = p[i];
    const c = p[i + 1];
    const e = p[i + 2] || c;
    d += `C${b[0] + (c[0] - a[0]) / 7} ${b[1] + (c[1] - a[1]) / 7} ${c[0] - (e[0] - b[0]) / 7} ${c[1] - (e[1] - b[1]) / 7} ${c[0]} ${c[1]}`;
  }
  return d;
}

const Areas = ({ list = [], fill }) => list.map((s, i) => <polygon key={i} points={s} fill={fill} />);
const Lines = ({ list = [], color, width }) =>
  list.map((s, i) => (
    <path key={i} d={curve(s)} fill="none" stroke={color} strokeWidth={width} strokeLinejoin="round" vectorEffect="non-scaling-stroke" />
  ));

const LABEL_TONES = [
  { fill: "#565656", stroke: "#fdfdfd", fontWeight: 700 },
  { fill: "#7d7d7d", stroke: "#f2f2f2", fontStyle: "italic" },
  { fill: "#b9b9b9", stroke: "none", fontStyle: "italic" },
];

function Sheet({ sheet, layer }) {
  const at = `translate(${sheet.x} ${sheet.y}) scale(${sheet.sx} ${SY})`;
  if (layer === "areas") {
    return (
      <g transform={at}>
        <Areas list={sheet.urban} fill="url(#streets)" />
        <Areas list={sheet.park} fill="#d7d7d7" />
        <Areas list={sheet.water} fill="#5e5e5e" />
        <Areas list={sheet.park2} fill="#d7d7d7" />
        <Areas list={sheet.land} fill="#fdfdfd" />
      </g>
    );
  }
  if (layer === "roads") {
    return (
      <g transform={at}>
        <Lines list={sheet.lagoon} color="#666" width={2.6} />
        <Lines list={sheet.divider} color="#8a8a8a" width={1.2} />
        <Lines list={sheet.mid} color="#a6a6a6" width={1.5} />
        <Lines list={sheet.major} color="#636363" width={2.7} />
      </g>
    );
  }
  return sheet.labels.map(([x, y, text, size, angle = 0, tone = 0], i) => (
    <text
      key={i}
      transform={`translate(${sheet.x + x * sheet.sx} ${sheet.y + y * SY}) rotate(${angle})`}
      fontSize={tone === 0 ? size * 0.95 : size}
      strokeWidth="1.6"
      paintOrder="stroke"
      {...LABEL_TONES[tone]}
    >
      {text}
    </text>
  ));
}

function BayMap() {
  return (
    <MapSvg width="1272" height="1352" viewBox="1088 184 1272 1352">
      <defs>
        <pattern id="streets" width="22" height="26" patternUnits="userSpaceOnUse" patternTransform="rotate(-38)">
          <path d="M0 4H22M0 17H14M6 0V26M16 4V17" fill="none" stroke="#f4f4f4" strokeWidth="2" />
        </pattern>
      </defs>
      {["areas", "roads"].map((layer) => SHEETS.map((s, i) => <Sheet key={layer + i} sheet={s} layer={layer} />))}
      {BRIDGES.map((d, i) => (
        <g key={i} fill="none">
          <path d={d} stroke="#b8b8b8" strokeWidth="4.500" />
          <path d={d} stroke="#6a6a6a" strokeWidth="2" />
        </g>
      ))}
      {SHEETS.map((s, i) => (
        <Sheet key={"labels" + i} sheet={s} layer="labels" />
      ))}
    </MapSvg>
  );
}

/* ---------- content ---------- */

const SITES = [
  { name: "Site 8: Hannah and Tom", height: 297 },
  { name: "Site 9: Anh and Tim", height: 307 },
  { name: "Site 10: Julia and Hui", height: 285 },
  { name: "Untitled", height: 232, selected: true },
];

const STEPS = [
  "Print your map",
  "Draw / write on the maps with one or more\ncolored pens. Make sure not to write on the\nbar code. Everywhere",
  "MapImage your map\nMapImagening w/\npictures are OK to\nthe entire map and",
  "Upload your file here",
];

function FontRow({ group, name, font, labelTop, drop, sizeTop, swatchTop, toggleTop }) {
  return (
    <>
      <Cell $top={labelTop}>{group}</Cell>
      <Cell $top={labelTop}>{name}</Cell>
      <Select $width={230} $drop={drop}>
        {font}
        <SelectCaret />
      </Select>
      <SizeInput $top={sizeTop} />
      <Swatch $top={swatchTop} />
      <StyleToggle $top={toggleTop}>
        <b>B</b>
        <i>it</i>
        <u>Aa</u>
      </StyleToggle>
    </>
  );
}

function PinSetting({ label }) {
  return (
    <PinRow>
      <PinLabel>{label}</PinLabel>
      <Pin />
      <ButtonCell>
        <Button $width={187}>Change</Button>
      </ButtonCell>
      <ButtonCell>
        <Button $width={187} $height={55}>Reset all</Button>
      </ButtonCell>
    </PinRow>
  );
}

function StyleDialog() {
  return (
    <Dialog>
      <SectionLabel>STYLE</SectionLabel>
      <MapStyleRow>
        <Cell $top={12}>Map Style:</Cell>
        <Select $width={322}>
          Stamen Toner
          <SelectCaret />
        </Select>
      </MapStyleRow>
      <FontGrid>
        <Cell />
        <Cell />
        <Cell>Font</Cell>
        <Cell>Size</Cell>
        <Cell>Color</Cell>
        <Cell>Style</Cell>
        <FontRow group="Fonts:" name="Title:" font="Bebas" labelTop={13} drop={4} sizeTop={0} swatchTop={6} toggleTop={-4} />
        <FontRow group="" name="Paragraph:" font="Helvetica" labelTop={15} drop={3} sizeTop={5} swatchTop={3} toggleTop={0} />
      </FontGrid>
      <PinRows>
        <PinSetting label="Default Unselected Pin:" />
        <PinSetting label="Default Selected Pin:" />
      </PinRows>
      <Footer>
        <Checkbox />
        <CheckLabel>Preview Changes</CheckLabel>
        <Actions>
          <Button $width={226}>Cancel</Button>
          <Button $width={226}>Save</Button>
        </Actions>
      </Footer>
    </Dialog>
  );
}

export default function App() {
  return (
    <>
      <GlobalStyle />
      <Page>
        <TopBar>
          <Logo>Local Ground</Logo>
          <ScreenName>Edit Style</ScreenName>
          <UserButton>
            username <Caret $color="#f4f4f4" $drop={2} />
          </UserButton>
        </TopBar>
        <Toolbar>
          <ProjectName>Berkeley Stuff</ProjectName>
          <AddButton $width={228}>
            <Plus>+</Plus>
            Add New <Caret $color="#f4f4f4" $drop={5} />
          </AddButton>
          <Segments>
            <Segment $width={26} />
            <Segment $width={203}>Symbols</Segment>
            <Segment $width={147}>Tour</Segment>
            <Segment $width={144} $active $last>Style</Segment>
          </Segments>
          <IconButton $width={161} $pad={18} $gap={12} $after={14}>
            <PencilIcon /> Edit
          </IconButton>
          <IconButton $width={145} $dark $pad={14} $gap={6}>
            <ShareIcon /> Share
          </IconButton>
        </Toolbar>
        <Body>
          <Sidebar>
            {SITES.map((s) => (
              <SiteItem key={s.name} $height={s.height} $selected={s.selected}>
                <Pin halo={s.selected} indent={67} />
                <SiteLabel>{s.name}</SiteLabel>
              </SiteItem>
            ))}
          </Sidebar>
          <Editor>
            <SectionLabel>
              INSTRUCTIONS <Caret $color="#8f8f8f" $drop={4} />
            </SectionLabel>
            <Steps>
              {STEPS.map((s, i) => (
                <Step key={i}>
                  <span>{i + 1}.</span>
                  <span>{s}</span>
                </Step>
              ))}
            </Steps>
            <TitleInput>Title</TitleInput>
            <DropZone>
              <DashFrame width="630" height="276">
                <rect x="0" y="0" width="630" height="276" rx="4" fill="none" stroke="#e0e0e0" strokeWidth="5" strokeLinecap="round" strokeDasharray="4.8 15.95" />
              </DashFrame>
              <AddMedia>+ Add</AddMedia>
            </DropZone>
            <TagsLabel>TAGS</TagsLabel>
            <TagsInput />
          </Editor>
          <MapPane>
            <BayMap />
            <Marker $x={608} $y={340}>
              <Pin />
            </Marker>
            <Marker $x={661} $y={374.5}>
              <Pin halo />
            </Marker>
          </MapPane>
        </Body>
        <StyleDialog />
      </Page>
    </>
  );
}
